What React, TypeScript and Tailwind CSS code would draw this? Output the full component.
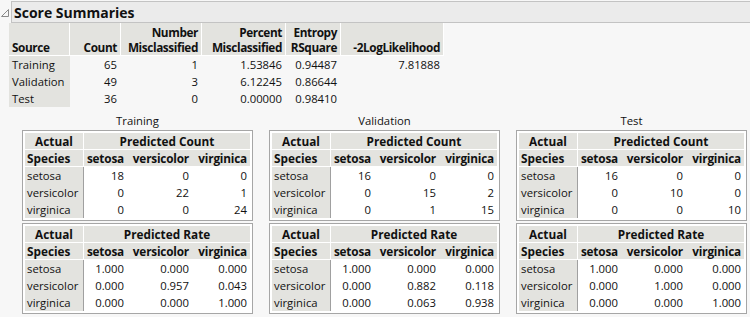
import type { ReactNode } from "react";

const FONT = { fontFamily: '"Open Sans", "Noto Sans", Arial, sans-serif' };

const summaryRows = [
  { source: "Training", count: "65", number: "1", percent: "1.53846", entropy: "0.94487", ll: "7.81888" },
  { source: "Validation", count: "49", number: "3", percent: "6.12245", entropy: "0.86644", ll: "" },
  { source: "Test", count: "36", number: "0", percent: "0.00000", entropy: "0.98410", ll: "" },
];

const species = ["setosa", "versicolor", "virginica"];

const sets = [
  {
    name: "Training",
    counts: [["18", "0", "0"], ["0", "22", "1"], ["0", "0", "24"]],
    rates: [["1.000", "0.000", "0.000"], ["0.000", "0.957", "0.043"], ["0.000", "0.000", "1.000"]],
  },
  {
    name: "Validation",
    counts: [["16", "0", "0"], ["0", "15", "2"], ["0", "1", "15"]],
    rates: [["1.000", "0.000", "0.000"], ["0.000", "0.882", "0.118"], ["0.000", "0.063", "0.938"]],
  },
  {
    name: "Test",
    counts: [["16", "0", "0"], ["0", "10", "0"], ["0", "0", "10"]],
    rates: [["1.000", "0.000", "0.000"], ["0.000", "1.000", "0.000"], ["0.000", "0.000", "1.000"]],
  },
];

function HeadCell({ children, align = "right" }: { children: ReactNode; align?: "left" | "right" }) {
  return (
    <th
      className={`border-b border-r border-white bg-[#e3e3df] px-[3px] pt-[2px] align-bottom text-[11.8px] font-bold leading-[15px] tracking-[-0.4px] ${
        align === "left" ? "text-left" : "text-right"
      }`}
    >
      {children}
    </th>
  );
}

function Matrix({ heading, values }: { heading: string; values: string[][] }) {
  return (
    <div className="w-[231px] border border-[#a6a6a6] bg-white p-[2px]">
      <table className="w-[225px] table-fixed border-separate border-spacing-0 text-[11.3px] leading-[16px]">
        <colgroup>
          <col className="w-[59px]" />
          <col className="w-[43px]" />
          <col className="w-[65px]" />
          <col className="w-[58px]" />
        </colgroup>
        <thead className="text-[11.8px]">
          <tr>
            <th className="h-[17px] border-b border-r border-white bg-[#e3e3df] text-center font-bold">Actual</th>
            <th colSpan={3} className="border-b border-white bg-[#e3e3df] text-center font-bold">
              {heading}
            </th>
          </tr>
          <tr>
            <th className="h-[17px] border-b border-r border-white bg-[#e3e3df] pl-[2px] text-left font-bold">
              Species
            </th>
            {species.map((s) => (
              <th key={s} className="border-b border-white bg-[#e3e3df] pr-[3px] text-right font-bold tracking-[-0.2px]">
                {s}
              </th>
            ))}
          </tr>
        </thead>
        <tbody>
          {values.map((row, i) => (
            <tr key={species[i]} className="h-[17px]">
              <td className="border-r border-[#a0a0a0] bg-[#e3e3df] pl-[2px] text-left">{species[i]}</td>
              {row.map((v, j) => (
                <td key={j} className="pr-[3px] text-right">
                  {v}
                </td>
              ))}
            </tr>
          ))}
        </tbody>
      </table>
    </div>
  );
}

export default function App() {
  return (
    <div className="h-[317px] w-[750px] overflow-hidden bg-[#f7f7f7] pt-px text-[#111]" style={FONT}>
      {/* outline title */}
      <div className="flex h-[22px]">
        <div className="flex w-[11px] items-start">
          <svg width="11" height="22" viewBox="0 0 11 22">
            <polygon points="1.5,15.5 8.5,15.5 8.5,8.5" fill="none" stroke="#8a8a8a" strokeWidth="1" />
          </svg>
        </div>
        <div className="flex flex-1 items-center border-y border-l border-[#c3c3c3] bg-[#ebebeb] pl-[2px] text-[14px] font-bold">
          Score Summaries
        </div>
      </div>

      <table className="ml-[9px] w-[435px] table-fixed border-separate border-spacing-0 text-[11.3px] leading-[17px]">
        <colgroup>
          <col className="w-[61px]" />
          <col className="w-[51px]" />
          <col className="w-[81px]" />
          <col className="w-[84px]" />
          <col className="w-[55px]" />
          <col className="w-[103px]" />
        </colgroup>
        <thead>
          <tr>
            <HeadCell align="left">Source</HeadCell>
            <HeadCell>Count</HeadCell>
            <HeadCell>
              Number
              <br />
              Misclassified
            </HeadCell>
            <HeadCell>
              Percent
              <br />
              Misclassified
            </HeadCell>
            <HeadCell>
              Entropy
              <br />
              RSquare
            </HeadCell>
            <HeadCell>-2LogLikelihood</HeadCell>
          </tr>
        </thead>
        <tbody>
          {summaryRows.map((r) => (
            <tr key={r.source} className="h-[17px]">
              <td className="bg-[#e3e3df] px-[3px]">{r.source}</td>
              <td className="pr-[4px] text-right">{r.count}</td>
              <td className="pr-[4px] text-right">{r.number}</td>
              <td className="pr-[4px] text-right">{r.percent}</td>
              <td className="pr-[4px] text-right">{r.entropy}</td>
              <td className="pr-[4px] text-right">{r.ll}</td>
            </tr>
          ))}
        </tbody>
      </table>

      <div className="ml-[22px] mt-[6px] flex gap-4">
        {sets.map((s) => (
          <div key={s.name} className="flex flex-col gap-[2px]">
            <div className="text-center text-[11.3px] leading-[15px]">{s.name}</div>
            <Matrix heading="Predicted Count" values={s.counts} />
            <Matrix heading="Predicted Rate" values={s.rates} />
          </div>
        ))}
      </div>
    </div>
  );
}
